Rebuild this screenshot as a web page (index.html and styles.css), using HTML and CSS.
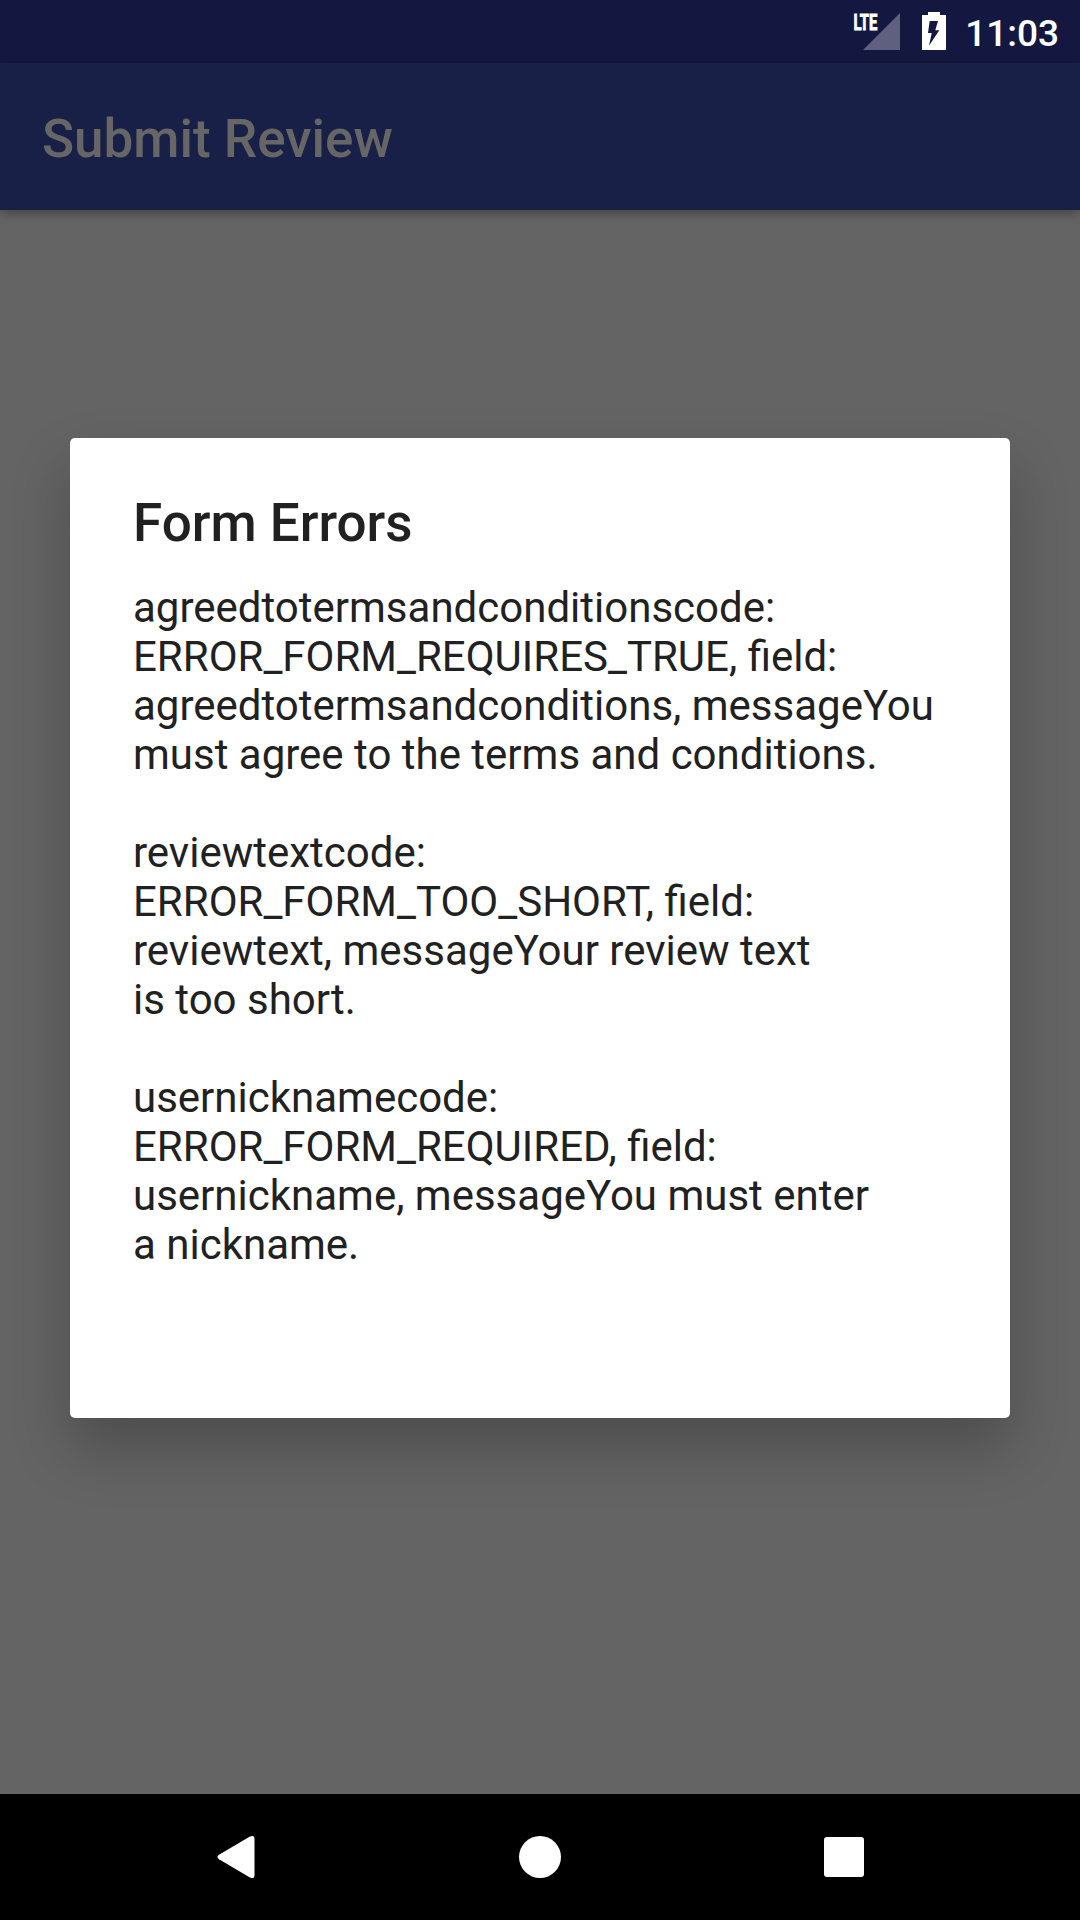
FILE: index.html
```html
<!DOCTYPE html>
<html lang="en">
<head>
<meta charset="utf-8">
<title>Submit Review</title>
<link rel="stylesheet" href="styles.css">
</head>
<body>
<div class="screen">
  <header class="status-bar">
    <svg class="signal" width="50" height="44" viewBox="0 0 50 44"><path class="signal-fill" d="M48 3V40H11Z"/><text class="lte" transform="translate(1.4 20) scale(.66 1)">LTE</text></svg>
    <svg class="battery" width="24" height="38" viewBox="0 0 24 38"><path fill="#fff" d="M6 0h12v3h6v35H0V3h6z"/><path fill="#141840" d="M7.7 9H16l-2.7 9.3h4L7 33.7 9.7 21H6z"/></svg>
    <span class="clock">11:03</span>
  </header>
  <div class="app-bar"><h1 class="app-title">Submit Review</h1></div>
  <main class="content">
    <section class="dialog">
      <h2 class="dialog-title">Form Errors</h2>
      <p class="message">agreedtotermsandconditionscode:
ERROR_FORM_REQUIRES_TRUE, field:
agreedtotermsandconditions, messageYou
must agree to the terms and conditions.

reviewtextcode:
ERROR_FORM_TOO_SHORT, field:
reviewtext, messageYour review text
is too short.

usernicknamecode:
ERROR_FORM_REQUIRED, field:
usernickname, messageYou must enter
a nickname.</p>
    </section>
  </main>
  <nav class="nav-bar">
    <svg width="44" height="44" viewBox="0 0 44 44"><path d="M35.500 1.800Q40.500-.8 40.500 4V40Q40.500 44.800 35.500 42.200L5 24.200Q1.800 22 5 19.800Z"/></svg>
    <svg width="44" height="44" viewBox="0 0 44 44"><circle cx="22" cy="22" r="21"/></svg>
    <svg width="44" height="44" viewBox="0 0 44 44"><rect x="2" y="2" width="40" height="40" rx="3"/></svg>
  </nav>
</div>
</body>
</html>
```
FILE: styles.css
```css
body { margin: 0; font-family: Roboto, sans-serif; }
.screen { display: flex; flex-direction: column; width: 1080px; height: 1920px; overflow: hidden; background: #646464; }
.status-bar { display: flex; justify-content: flex-end; height: 63px; box-sizing: border-box; padding: 10px 21px 0 0; background: #141840; }
.battery { margin: 2px 19px 0 20px; }
.signal-fill { fill: #5f6080; }
.lte { fill: #fff; stroke: #fff; stroke-width: .9px; font-size: 22.5px; font-weight: 700; }
.clock { color: #fff; font-size: 37px; line-height: 48px; font-weight: 500; }
.app-bar { display: flex; align-items: center; height: 147px; padding: 4px 42px 0; box-sizing: border-box; background: #192048; box-shadow: 0 4px 10px rgba(0,0,0,.3); }
.app-title { margin: 0; color: #666; font-size: 53px; font-weight: 500; }
.content { height: 1584px; flex: none; display: flex; align-items: flex-start; justify-content: center; padding-top: 228px; box-sizing: border-box; }
.dialog { width: 940px; height: 980px; box-sizing: border-box; padding: 52px 63px 0; background: #fff; border-radius: 5px; box-shadow: 0 30px 60px rgba(0,0,0,.24); }
.dialog-title { margin: 0; color: #212121; font-size: 53px; line-height: 66px; font-weight: 500; }
.message { margin: 27px 0 0; color: #212121; font-size: 42px; line-height: 49px; white-space: pre; }
.nav-bar { display: flex; height: 126px; align-items: center; justify-content: space-between; padding: 0 214px; background: #000; fill: #fff; }
```
